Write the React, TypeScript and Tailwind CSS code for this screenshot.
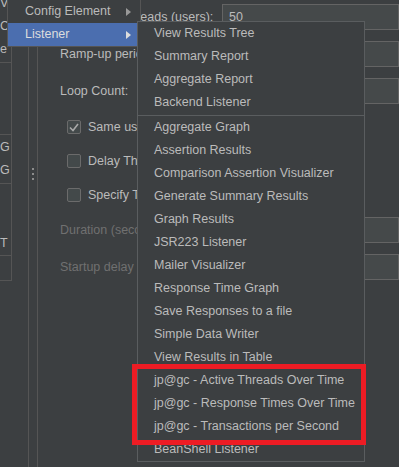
const listenerTop = ["View Results Tree", "Summary Report", "Aggregate Report", "Backend Listener"];

const listenerRest = [
  "Aggregate Graph",
  "Assertion Results",
  "Comparison Assertion Visualizer",
  "Generate Summary Results",
  "Graph Results",
  "JSR223 Listener",
  "Mailer Visualizer",
  "Response Time Graph",
  "Save Responses to a file",
  "Simple Data Writer",
  "View Results in Table",
  "jp@gc - Active Threads Over Time",
  "jp@gc - Response Times Over Time",
  "jp@gc - Transactions per Second",
  "BeanShell Listener",
];

function Arrow({ color }: { color: string }) {
  return (
    <svg width="5" height="8" viewBox="0 0 5 8" className="shrink-0">
      <polygon points="0,0 5,4 0,8" fill={color} />
    </svg>
  );
}

function MenuItem({ label }: { label: string }) {
  return <div className="h-[23px] leading-[22px] pl-[16px] whitespace-nowrap text-[#bbbbbb]">{label}</div>;
}

function Field({ value }: { value?: string }) {
  return (
    <div className="flex-1 h-[26px] border border-[#646464] bg-[#45494a] pl-[6px] leading-[24px] text-[#bbbbbb]">
      {value}
    </div>
  );
}

function Checkbox({ checked, label }: { checked?: boolean; label: string }) {
  return (
    <div className="h-[34px] flex items-center pl-[7px] gap-[7px] whitespace-nowrap">
      <div className="w-[14px] h-[14px] border border-[#6b6b6b] rounded-[2px] bg-[#43494a] flex items-center justify-center">
        {checked && (
          <svg width="10" height="9" viewBox="0 0 10 9">
            <polyline points="1,4.5 4,7.5 9,1" fill="none" stroke="#a9a9a9" strokeWidth="1.6" />
          </svg>
        )}
      </div>
      <span className="text-[#bbbbbb]">{label}</span>
    </div>
  );
}

export default function App() {
  return (
    <div className="relative w-[399px] h-[467px] overflow-hidden bg-[#3c3f41] font-['Liberation_Sans',Arial,sans-serif] text-[12.5px]">
      <div className="flex h-full">
        {/* Tree panel (clipped) */}
        <div className="w-[12px] shrink-0">
          <div className="border-r border-[#555555] text-[#bbbbbb] overflow-hidden">
            <div className="h-[63px] border-b border-[#555555] overflow-hidden">
              <div className="h-[23px] leading-[23px] mt-[-8px]">V</div>
              <div className="h-[23px] leading-[23px]">C</div>
              <div className="h-[23px] leading-[23px]">e</div>
            </div>
            <div className="h-[72px] border-b border-[#555555]" />
            <div className="h-[49px] border-b border-[#555555] pt-[1px]">
              <div className="h-[23px] leading-[23px]">G</div>
              <div className="h-[23px] leading-[23px]">G</div>
            </div>
            <div className="h-[72px] border-b border-[#555555] flex flex-col justify-end">
              <div className="h-[23px] leading-[23px]">T</div>
            </div>
            <div className="h-[25px] border-b border-[#555555]" />
          </div>
        </div>

        {/* Split divider */}
        <div className="w-[27px] shrink-0 flex h-full">
          <div className="w-[17px] border-r border-[#555555]" />
          <div className="w-[9px] border-r border-[#555555] flex flex-col items-center justify-center gap-[3px] pb-[119px]">
            <div className="w-[2px] h-[2px] bg-[#8c8c8c]" />
            <div className="w-[2px] h-[2px] bg-[#8c8c8c]" />
            <div className="w-[2px] h-[2px] bg-[#8c8c8c]" />
          </div>
        </div>

        {/* Thread group form */}
        <div className="flex-1 min-w-0 pl-[21px] pt-[4px] flex flex-col whitespace-nowrap">
          <div className="flex items-center">
            <span className="w-[162px] shrink-0 text-[#bbbbbb]">Number of Threads (users):</span>
            <Field value="50" />
          </div>
          <div className="flex items-center mt-[11px]">
            <span className="w-[162px] shrink-0 text-[#bbbbbb]">Ramp-up period (seconds):</span>
            <Field value="1" />
          </div>
          <div className="flex items-center mt-[11px]">
            <span className="w-[162px] shrink-0 text-[#bbbbbb]">Loop Count:</span>
            <Field value="1" />
          </div>
          <div className="mt-[6px]">
            <Checkbox checked label="Same user on each iteration" />
            <Checkbox label="Delay Thread creation until needed" />
            <Checkbox label="Specify Thread lifetime" />
          </div>
          <div className="flex items-center mt-[5px]">
            <span className="w-[162px] shrink-0 text-[#707070]">Duration (seconds):</span>
            <Field />
          </div>
          <div className="flex items-center mt-[11px]">
            <span className="w-[162px] shrink-0 text-[#707070]">Startup delay (seconds):</span>
            <Field />
          </div>
        </div>
      </div>

      {/* Add menu */}
      <div className="absolute left-[7px] top-[-1px] w-[134px] border border-[#555555] bg-[#3c3f41]">
        <div className="h-[23px] flex items-center justify-between pl-[17px] pr-[9px] text-[#bbbbbb]">
          <span>Config Element</span>
          <Arrow color="#999999" />
        </div>
        <div className="h-[23px] flex items-center justify-between pl-[17px] pr-[9px] bg-[#4b6eaf] text-[#dddddd]">
          <span>Listener</span>
          <Arrow color="#dddddd" />
        </div>
      </div>

      {/* Listener submenu */}
      <div className="absolute left-[137px] top-[21px] w-[228px] border border-[#5a5d5f] bg-[#3c3f41]">
        {listenerTop.map((l) => (
          <MenuItem key={l} label={l} />
        ))}
        <div className="h-[2px] border-b border-[#5a5d5f]" />
        {listenerRest.map((l) => (
          <MenuItem key={l} label={l} />
        ))}
      </div>

      {/* Highlight box */}
      <div className="absolute left-[132px] top-[364px] w-[234px] h-[81px] border-[5px] border-[#ed1c24]" />
    </div>
  );
}
